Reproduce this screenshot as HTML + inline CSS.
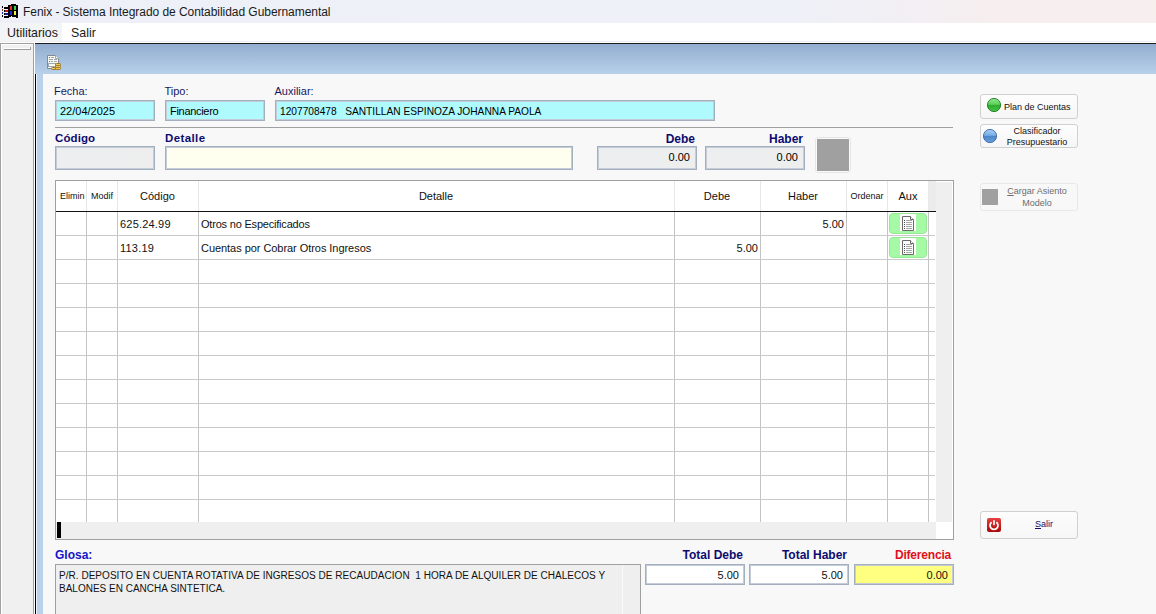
<!DOCTYPE html>
<html><head><meta charset="utf-8">
<style>
*{box-sizing:border-box;margin:0;padding:0}
html,body{width:1156px;height:614px;overflow:hidden;background:#f7f7f7;font-family:"Liberation Sans",sans-serif;font-size:11px;color:#000;position:relative}
.a{position:absolute}
.t{position:absolute;white-space:nowrap;line-height:1}
u{text-decoration:underline;text-underline-offset:1px}
</style></head><body>
<div class="a" style="left:0px;top:0px;width:1156px;height:23px;background:linear-gradient(90deg,#edf1f7 0%,#eef1f8 68%,#f2eff4 78%,#f6eeef 86%,#f7efee 100%)"></div>
<svg class="a" style="left:0;top:0" width="22" height="22" viewBox="0 0 22 22" shape-rendering="crispEdges">
<path d="M8 5H11V4H16V5H18V18H16V17H12V16H11V17H9V18H8Z" fill="#000"/>
<rect x="10" y="6" width="2" height="4" fill="#e42c2c"/><rect x="14" y="6" width="2" height="4" fill="#34d844"/>
<rect x="10" y="11" width="2" height="4" fill="#1c2cd4"/><rect x="14" y="11" width="2" height="4" fill="#f2f040"/>
<rect x="4" y="7" width="4" height="2" fill="#000"/><rect x="4" y="10" width="4" height="2" fill="#d41010"/><rect x="4" y="10" width="1" height="2" fill="#000"/>
<rect x="4" y="13" width="4" height="2" fill="#1020a8"/><rect x="4" y="13" width="1" height="2" fill="#000"/><rect x="4" y="16" width="4" height="2" fill="#000"/>
<rect x="2" y="6" width="1" height="2" fill="#000"/><rect x="2" y="9" width="1" height="2" fill="#7a3030"/><rect x="2" y="12" width="1" height="2" fill="#2030a0"/><rect x="2" y="15" width="1" height="2" fill="#000"/>
</svg>
<div class="t" style="left:23px;top:5.84px;font-size:12px;color:#1a1a1a;letter-spacing:-0.05px">Fenix - Sistema Integrado de Contabilidad Gubernamental</div>
<div class="a" style="left:0px;top:23px;width:1156px;height:20px;background:#fff"></div>
<div class="a" style="left:0px;top:23px;width:62px;height:19px;background:#f3f4f6"></div>
<div class="t" style="left:7px;top:26.50px;font-size:12.4px;color:#1a1a1a">Utilitarios</div>
<div class="t" style="left:71px;top:26.50px;font-size:12.4px;color:#1a1a1a">Salir</div>
<div class="a" style="left:0px;top:41px;width:1156px;height:1px;background:#f0f0f0"></div>
<div class="a" style="left:0px;top:43px;width:34px;height:571px;background:#f0f0f0;border:1px solid #a0a0a0;border-bottom:none;box-shadow:inset 1px 1px 0 #fff"></div>
<div class="a" style="left:4px;top:48px;width:27px;height:1px;background:#fff"></div>
<div class="a" style="left:4px;top:49px;width:27px;height:1px;background:#9c9c9c"></div>
<div class="a" style="left:30px;top:47px;width:1px;height:3px;background:#9c9c9c"></div>
<div class="a" style="left:34px;top:43px;width:1px;height:571px;background:#fff"></div>
<div class="a" style="left:35px;top:43px;width:1121px;height:1px;background:#1e1e1e"></div>
<div class="a" style="left:35px;top:44px;width:1121px;height:30px;background:linear-gradient(#93aed0,#b8d0e9)"></div>
<div class="a" style="left:35px;top:74px;width:1px;height:540px;background:#000"></div>
<div class="a" style="left:36px;top:74px;width:1px;height:540px;background:#eef4fb"></div>
<div class="a" style="left:37px;top:74px;width:6px;height:540px;background:#b9d1ea"></div>
<div class="a" style="left:43px;top:74px;width:1113px;height:540px;background:#f8f8f8"></div>
<svg class="a" style="left:42px;top:50px" width="22" height="22" viewBox="0 0 22 22">
<path d="M5.5 5.5H13.5L16.5 8.5V18.5H5.5Z" fill="#f6f8f2" stroke="#7f8b96"/>
<path d="M13.5 5.5V8.5H16.5" fill="#fff" stroke="#a0aab4"/>
<g fill="#6a6a6a"><rect x="7" y="7" width="1" height="1"/><rect x="7" y="11" width="1" height="1"/></g>
<g fill="#a4a8ac"><rect x="9" y="7" width="3" height="1"/><rect x="7" y="9" width="4" height="1"/><rect x="12" y="9" width="3" height="1"/><rect x="9" y="11" width="2" height="1"/><rect x="12" y="11" width="3" height="1"/></g>
<rect x="6.5" y="13.5" width="7" height="3" fill="#fbfbf6" stroke="#a0aab4"/>
<g fill="#f2cc60" stroke="#94701c" stroke-width="0.9"><rect x="9.5" y="17.5" width="4.5" height="2" rx="1"/><rect x="13.5" y="13.5" width="5" height="2" rx="1"/><rect x="13.5" y="15.5" width="5" height="2" rx="1"/><rect x="13.5" y="17.5" width="5" height="2" rx="1"/></g>
</svg>
<div class="t" style="left:54px;top:85.69px;font-size:11px;color:#181860">Fecha:</div>
<div class="t" style="left:164.5px;top:85.69px;font-size:11px;color:#181860">Tipo:</div>
<div class="t" style="left:274.5px;top:85.69px;font-size:11px;color:#181860">Auxiliar:</div>
<div class="a" style="left:55px;top:100px;width:100px;height:21px;border:1px solid #a4afbd;box-shadow:inset 0 0 0 1px #c3ccd8;background:#aefafd;"></div>
<div class="a" style="left:165px;top:100px;width:100px;height:21px;border:1px solid #a4afbd;box-shadow:inset 0 0 0 1px #c3ccd8;background:#aefafd;"></div>
<div class="a" style="left:275px;top:100px;width:440px;height:21px;border:1px solid #a4afbd;box-shadow:inset 0 0 0 1px #c3ccd8;background:#aefafd;"></div>
<div class="t" style="left:60px;top:105.69px;font-size:11px;">22/04/2025</div>
<div class="t" style="left:170px;top:105.69px;font-size:11px;letter-spacing:-0.3px">Financiero</div>
<div class="t" style="left:280px;top:107.37px;font-size:10.2px;">1207708478 &nbsp; SANTILLAN ESPINOZA JOHANNA PAOLA</div>
<div class="a" style="left:55px;top:127px;width:898px;height:1px;background:#a0a0a0"></div>
<div class="t" style="left:55px;top:133.27px;font-size:11.5px;color:#0c0c70;font-weight:bold;letter-spacing:0.1px">Código</div>
<div class="t" style="left:165px;top:133.27px;font-size:11.5px;color:#0c0c70;font-weight:bold;letter-spacing:0.4px">Detalle</div>
<div class="t" style="left:295px;width:400px;text-align:right;top:133.44px;font-size:12px;color:#0c0c70;font-weight:bold">Debe</div>
<div class="t" style="left:403px;width:400px;text-align:right;top:133.44px;font-size:12px;color:#0c0c70;font-weight:bold">Haber</div>
<div class="a" style="left:55px;top:146px;width:100px;height:24px;border:1px solid #a4afbd;box-shadow:inset 0 0 0 1px #c3ccd8;background:linear-gradient(90deg,#eceef0,#eeeeee);"></div>
<div class="a" style="left:165px;top:146px;width:408px;height:24px;border:1px solid #a4afbd;box-shadow:inset 0 0 0 1px #c3ccd8;background:#fffff0;"></div>
<div class="a" style="left:597px;top:146px;width:100px;height:24px;border:1px solid #a4afbd;box-shadow:inset 0 0 0 1px #c3ccd8;background:linear-gradient(90deg,#eceef0,#eeeeee);"></div>
<div class="a" style="left:705px;top:146px;width:100px;height:24px;border:1px solid #a4afbd;box-shadow:inset 0 0 0 1px #c3ccd8;background:linear-gradient(90deg,#eceef0,#eeeeee);"></div>
<div class="t" style="left:290px;width:400px;text-align:right;top:151.69px;font-size:11px;">0.00</div>
<div class="t" style="left:398px;width:400px;text-align:right;top:151.69px;font-size:11px;">0.00</div>
<div class="a" style="left:815px;top:137px;width:36px;height:36px;border:1px solid #e6e6e6;border-radius:3px;background:#fafafa"></div>
<div class="a" style="left:817px;top:139px;width:32px;height:32px;background:#a0a0a0"></div>
<div class="a" style="left:55px;top:180px;width:899px;height:360px;background:#fff;border:1px solid #a0a0a0"></div>
<div class="a" style="left:928px;top:181px;width:8px;height:30px;background:#ececec"></div>
<div class="a" style="left:936px;top:182px;width:16px;height:340px;background:#efefef"></div>
<div class="a" style="left:56px;top:522px;width:880px;height:17px;background:#efefef"></div>
<div class="a" style="left:57px;top:522px;width:4px;height:16px;background:#000"></div>
<div class="a" style="left:86px;top:181px;width:1px;height:30px;background:#e8e8e8"></div>
<div class="a" style="left:117px;top:181px;width:1px;height:30px;background:#e8e8e8"></div>
<div class="a" style="left:198px;top:181px;width:1px;height:30px;background:#e8e8e8"></div>
<div class="a" style="left:674px;top:181px;width:1px;height:30px;background:#e8e8e8"></div>
<div class="a" style="left:760px;top:181px;width:1px;height:30px;background:#e8e8e8"></div>
<div class="a" style="left:846px;top:181px;width:1px;height:30px;background:#e8e8e8"></div>
<div class="a" style="left:887px;top:181px;width:1px;height:30px;background:#e8e8e8"></div>
<div class="a" style="left:928px;top:181px;width:1px;height:30px;background:#e8e8e8"></div>
<div class="a" style="left:56px;top:211px;width:880px;height:1px;background:#111"></div>
<div class="a" style="left:86px;top:212px;width:1px;height:310px;background:#c4c4c4"></div>
<div class="a" style="left:117px;top:212px;width:1px;height:310px;background:#c4c4c4"></div>
<div class="a" style="left:198px;top:212px;width:1px;height:310px;background:#c4c4c4"></div>
<div class="a" style="left:674px;top:212px;width:1px;height:310px;background:#c4c4c4"></div>
<div class="a" style="left:760px;top:212px;width:1px;height:310px;background:#c4c4c4"></div>
<div class="a" style="left:846px;top:212px;width:1px;height:310px;background:#c4c4c4"></div>
<div class="a" style="left:887px;top:212px;width:1px;height:310px;background:#c4c4c4"></div>
<div class="a" style="left:928px;top:212px;width:1px;height:310px;background:#c4c4c4"></div>
<div class="a" style="left:56px;top:235px;width:879px;height:1px;background:#c8c8c8"></div>
<div class="a" style="left:56px;top:259px;width:879px;height:1px;background:#c8c8c8"></div>
<div class="a" style="left:56px;top:283px;width:879px;height:1px;background:#c8c8c8"></div>
<div class="a" style="left:56px;top:307px;width:879px;height:1px;background:#c8c8c8"></div>
<div class="a" style="left:56px;top:331px;width:879px;height:1px;background:#c8c8c8"></div>
<div class="a" style="left:56px;top:355px;width:879px;height:1px;background:#c8c8c8"></div>
<div class="a" style="left:56px;top:379px;width:879px;height:1px;background:#c8c8c8"></div>
<div class="a" style="left:56px;top:403px;width:879px;height:1px;background:#c8c8c8"></div>
<div class="a" style="left:56px;top:427px;width:879px;height:1px;background:#c8c8c8"></div>
<div class="a" style="left:56px;top:451px;width:879px;height:1px;background:#c8c8c8"></div>
<div class="a" style="left:56px;top:475px;width:879px;height:1px;background:#c8c8c8"></div>
<div class="a" style="left:56px;top:499px;width:879px;height:1px;background:#c8c8c8"></div>
<div class="t" style="left:60px;top:191.98px;font-size:9px;color:#111">Elimin</div>
<div class="t" style="left:91px;top:191.98px;font-size:9px;color:#111">Modif</div>
<div class="t" style="left:-42.5px;width:400px;text-align:center;top:190.69px;font-size:11px;color:#111">Código</div>
<div class="t" style="left:236.0px;width:400px;text-align:center;top:190.69px;font-size:11px;color:#111">Detalle</div>
<div class="t" style="left:517.0px;width:400px;text-align:center;top:190.69px;font-size:11px;color:#111">Debe</div>
<div class="t" style="left:603.0px;width:400px;text-align:center;top:190.69px;font-size:11px;color:#111">Haber</div>
<div class="t" style="left:667.0px;width:400px;text-align:center;top:191.98px;font-size:9px;color:#111">Ordenar</div>
<div class="t" style="left:708.0px;width:400px;text-align:center;top:190.69px;font-size:11px;color:#111">Aux</div>
<div class="t" style="left:120px;top:218.69px;font-size:11px;color:#111;letter-spacing:0.2px">625.24.99</div>
<div class="t" style="left:201px;top:218.69px;font-size:11px;color:#111;letter-spacing:-0.2px">Otros no Especificados</div>
<div class="t" style="left:444px;width:400px;text-align:right;top:218.69px;font-size:11px;color:#111">5.00</div>
<div class="t" style="left:120px;top:242.69px;font-size:11px;color:#111;letter-spacing:0.2px">113.19</div>
<div class="t" style="left:201px;top:242.69px;font-size:11px;color:#111;letter-spacing:-0.05px">Cuentas por Cobrar Otros Ingresos</div>
<div class="t" style="left:358px;width:400px;text-align:right;top:242.69px;font-size:11px;color:#111">5.00</div>
<div class="a" style="left:889px;top:213px;width:38px;height:21px;background:#a6faa6;border-radius:4px;border:1px solid #94e894"></div>
<svg class="a" style="left:900px;top:214px" width="16" height="17" viewBox="0 0 16 17">
<rect x="0" y="0" width="16" height="17" fill="#fff"/>
<path d="M2.5 2.5H10.5L13.5 5.5V16.5H2.5Z" fill="#fdfdfd" stroke="#6a6a6a"/>
<path d="M10.5 2.5V5.5H13.5" fill="#fff" stroke="#6a6a6a"/>
<g fill="#505050"><rect x="4" y="6" width="1" height="1"/><rect x="4" y="8" width="1" height="1"/><rect x="4" y="10" width="1" height="1"/><rect x="4" y="12" width="1" height="1"/><rect x="4" y="14" width="1" height="1"/></g>
<g fill="#a8a8a8"><rect x="6" y="6" width="6" height="1"/><rect x="6" y="8" width="6" height="1"/><rect x="6" y="10" width="6" height="1"/><rect x="6" y="12" width="6" height="1"/><rect x="6" y="14" width="6" height="1"/></g>
</svg>
<div class="a" style="left:889px;top:237px;width:38px;height:21px;background:#a6faa6;border-radius:4px;border:1px solid #94e894"></div>
<svg class="a" style="left:900px;top:238px" width="16" height="17" viewBox="0 0 16 17">
<rect x="0" y="0" width="16" height="17" fill="#fff"/>
<path d="M2.5 2.5H10.5L13.5 5.5V16.5H2.5Z" fill="#fdfdfd" stroke="#6a6a6a"/>
<path d="M10.5 2.5V5.5H13.5" fill="#fff" stroke="#6a6a6a"/>
<g fill="#505050"><rect x="4" y="6" width="1" height="1"/><rect x="4" y="8" width="1" height="1"/><rect x="4" y="10" width="1" height="1"/><rect x="4" y="12" width="1" height="1"/><rect x="4" y="14" width="1" height="1"/></g>
<g fill="#a8a8a8"><rect x="6" y="6" width="6" height="1"/><rect x="6" y="8" width="6" height="1"/><rect x="6" y="10" width="6" height="1"/><rect x="6" y="12" width="6" height="1"/><rect x="6" y="14" width="6" height="1"/></g>
</svg>
<div class="a" style="left:980px;top:94px;width:98px;height:25px;border:1px solid #d0d0d0;border-radius:3px;background:linear-gradient(#fdfdfd,#f6f6f6);"></div>
<svg class="a" style="left:986px;top:97px" width="16" height="16" viewBox="0 0 16 16">
<defs><linearGradient id="gg" x1="0" y1="0" x2="0" y2="1"><stop offset="0" stop-color="#8ee88e"/><stop offset="0.45" stop-color="#5ed05e"/><stop offset="0.52" stop-color="#2eac2e"/><stop offset="1" stop-color="#48c448"/></linearGradient></defs>
<circle cx="8" cy="8" r="6.6" fill="url(#gg)" stroke="#1e7a1e" stroke-width="0.9"/></svg>
<div class="t" style="left:1004px;top:103.38px;font-size:9px;color:#111">Plan de Cuentas</div>
<div class="a" style="left:980px;top:124px;width:98px;height:24px;border:1px solid #d0d0d0;border-radius:3px;background:linear-gradient(#fdfdfd,#f6f6f6);"></div>
<svg class="a" style="left:982px;top:128px" width="16" height="16" viewBox="0 0 16 16">
<defs><linearGradient id="bg" x1="0" y1="0" x2="0" y2="1"><stop offset="0" stop-color="#a8d0f4"/><stop offset="0.45" stop-color="#78aee4"/><stop offset="0.52" stop-color="#4c86c8"/><stop offset="1" stop-color="#68a0dc"/></linearGradient></defs>
<circle cx="8" cy="8" r="6.6" fill="url(#bg)" stroke="#3a68a8" stroke-width="0.9"/></svg>
<div class="t" style="left:837.0px;width:400px;text-align:center;top:127.38px;font-size:9px;color:#111">Clasificador</div>
<div class="t" style="left:837.0px;width:400px;text-align:center;top:137.58px;font-size:9px;color:#111">Presupuestario</div>
<div class="a" style="left:980px;top:183px;width:98px;height:28px;border:1px solid #d0d0d0;border-radius:3px;background:linear-gradient(#fdfdfd,#f6f6f6);border-color:#e8e8e8;background:#f8f8f8"></div>
<div class="a" style="left:982px;top:189px;width:16px;height:16px;background:#a0a0a0"></div>
<div class="t" style="left:837.0px;width:400px;text-align:center;top:187.38px;font-size:9px;color:#6d6d6d"><u>C</u>argar Asiento</div>
<div class="t" style="left:837.0px;width:400px;text-align:center;top:198.88px;font-size:9px;color:#6d6d6d">Modelo</div>
<div class="a" style="left:980px;top:511px;width:98px;height:28px;border:1px solid #d0d0d0;border-radius:3px;background:linear-gradient(#fdfdfd,#f6f6f6);"></div>
<svg class="a" style="left:987px;top:518px" width="14" height="14" viewBox="0 0 14 14">
<defs><linearGradient id="rg" x1="0" y1="0" x2="0" y2="1"><stop offset="0" stop-color="#e84040"/><stop offset="1" stop-color="#a80808"/></linearGradient></defs>
<rect x="0" y="0" width="14" height="14" rx="2" fill="url(#rg)"/>
<path d="M4.6 4.2A4 4 0 1 0 9.4 4.2" fill="none" stroke="#fff" stroke-width="1.7"/>
<rect x="6.2" y="2.2" width="1.6" height="5" fill="#fff"/></svg>
<div class="t" style="left:1035px;top:520.38px;font-size:9px;color:#10106e"><u>S</u>alir</div>
<div class="t" style="left:55px;top:549.24px;font-size:12px;color:#1414c8;font-weight:bold">Glosa:</div>
<div class="a" style="left:55px;top:564px;width:586px;height:60px;background:#efefef;border:1px solid #a0a0a0"></div>
<div class="a" style="left:622px;top:565px;width:1px;height:60px;background:#fafafa"></div>
<div class="t" style="left:59px;top:570.53px;font-size:10px;color:#111;letter-spacing:0.035px">P/R. DEPOSITO EN CUENTA ROTATIVA DE INGRESOS DE RECAUDACION &nbsp;1 HORA DE ALQUILER DE CHALECOS Y</div>
<div class="t" style="left:59px;top:583.53px;font-size:10px;color:#111">BALONES EN CANCHA SINTETICA.</div>
<div class="t" style="left:343px;width:400px;text-align:right;top:549.44px;font-size:12px;color:#0c0c70;font-weight:bold">Total Debe</div>
<div class="t" style="left:447px;width:400px;text-align:right;top:549.44px;font-size:12px;color:#0c0c70;font-weight:bold">Total Haber</div>
<div class="t" style="left:551px;width:400px;text-align:right;top:549.44px;font-size:12px;color:#e01020;font-weight:bold;letter-spacing:-0.2px">Diferencia</div>
<div class="a" style="left:645px;top:564px;width:100px;height:21px;border:1px solid #a4afbd;box-shadow:inset 0 0 0 1px #c3ccd8;background:#fff;"></div>
<div class="a" style="left:749px;top:564px;width:100px;height:21px;border:1px solid #a4afbd;box-shadow:inset 0 0 0 1px #c3ccd8;background:#fff;"></div>
<div class="a" style="left:854px;top:564px;width:100px;height:21px;border:1px solid #a4afbd;box-shadow:inset 0 0 0 1px #c3ccd8;background:#ffff80;"></div>
<div class="t" style="left:339px;width:400px;text-align:right;top:569.69px;font-size:11px;color:#111">5.00</div>
<div class="t" style="left:443px;width:400px;text-align:right;top:569.69px;font-size:11px;color:#111">5.00</div>
<div class="t" style="left:548px;width:400px;text-align:right;top:569.69px;font-size:11px;color:#111">0.00</div>
</body></html>
